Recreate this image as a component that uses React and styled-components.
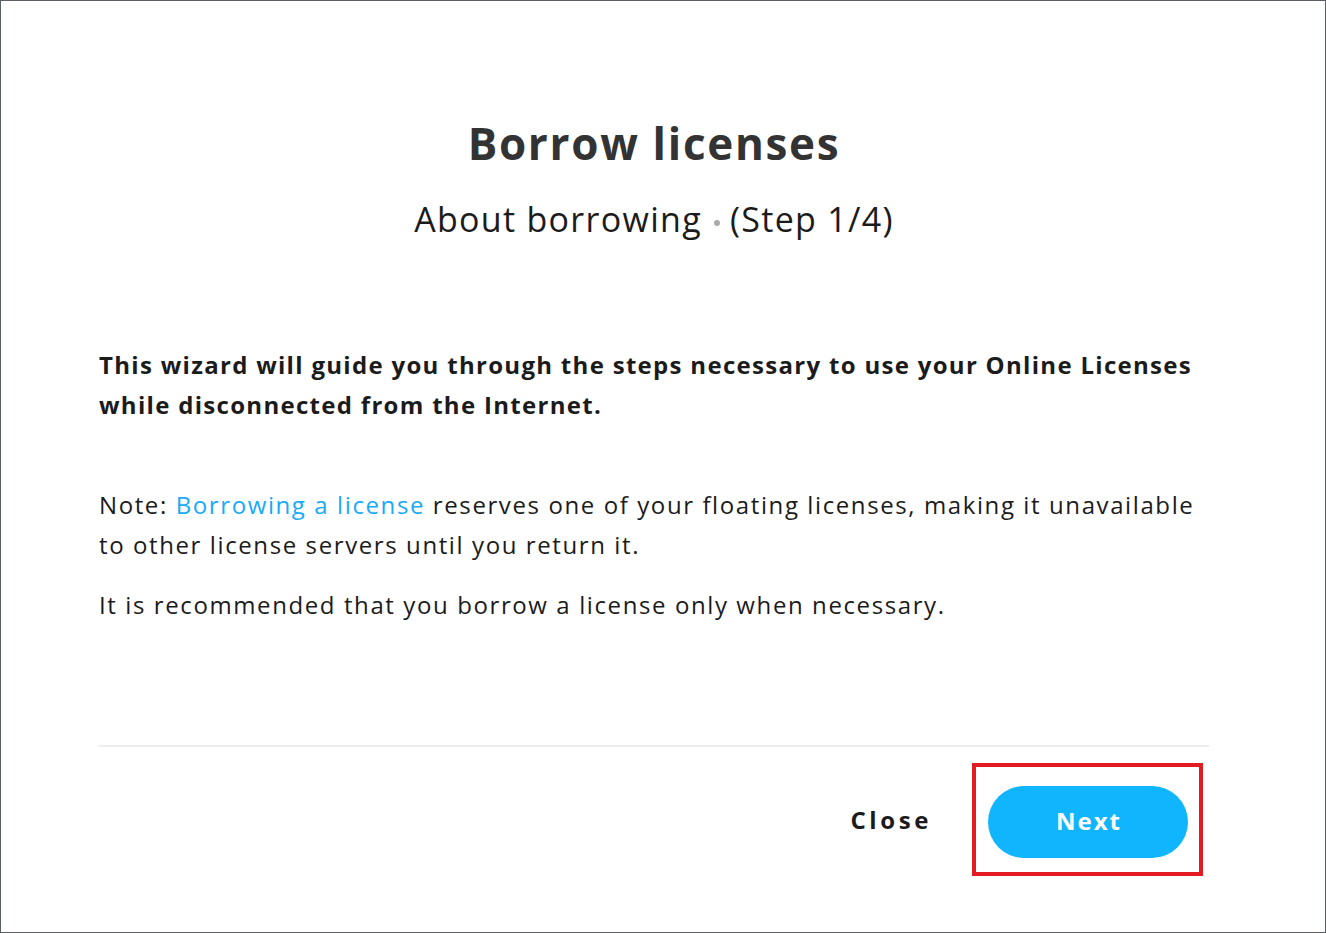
import React from "react";
import styled, { createGlobalStyle } from "styled-components";

const GlobalStyle = createGlobalStyle`
  html, body {
    margin: 0;
    padding: 0;
    background: #ffffff;
  }
  body {
    font-family: "Open Sans", "Noto Sans", sans-serif;
    color: #1b1b1b;
  }
`;

const Frame = styled.div`
  width: 1326px;
  height: 933px;
  box-sizing: border-box;
  border: 1px solid #5a5f66;
  background: #ffffff;
  padding: 0 116px 0 98px;
  display: flex;
  flex-direction: column;
`;

const Header = styled.header`
  text-align: center;
  padding-top: 112px;
`;

const Title = styled.h1`
  margin: 0;
  font-size: 44px;
  line-height: 60px;
  font-weight: 700;
  letter-spacing: 1.7px;
  color: #333333;
`;

const Subtitle = styled.h2`
  margin: 23px 0 0;
  font-size: 34px;
  line-height: 46px;
  font-weight: 400;
  letter-spacing: 1.3px;
  color: #1b1b1b;
`;

const Dot = styled.span`
  display: inline-block;
  width: 6px;
  height: 6px;
  border-radius: 50%;
  background: #aaaaaa;
  vertical-align: middle;
  margin: 0 10px 0 12px;
`;

const Body = styled.section`
  margin-top: 103px;
  flex: 1;
`;

const Lead = styled.p`
  margin: 0 0 60px;
  font-size: 24px;
  line-height: 40px;
  font-weight: 700;
  letter-spacing: 1.3px;
`;

const Text = styled.p`
  margin: 0 0 20px;
  font-size: 24px;
  line-height: 40px;
  font-weight: 400;
  letter-spacing: 1.6px;
`;

const Link = styled.a`
  color: #19aaf8;
  text-decoration: none;
  cursor: pointer;
`;

const Footer = styled.footer`
  border-top: 2px solid #ededed;
  display: flex;
  justify-content: flex-end;
  align-items: center;
  gap: 40px;
  padding: 16px 6px 56px 0;
`;

const CloseButton = styled.button`
  background: none;
  border: none;
  padding: 0;
  font-family: inherit;
  font-size: 24px;
  font-weight: 700;
  letter-spacing: 3.6px;
  color: #1b1b1b;
  cursor: pointer;
`;

const Highlight = styled.div`
  border: 4px solid #e21b23;
  padding: 19px 11px 14px 12px;
`;

const NextButton = styled.button`
  width: 200px;
  height: 72px;
  border: none;
  border-radius: 36px;
  background: #10b5fd;
  color: #ffffff;
  font-family: inherit;
  font-size: 24px;
  font-weight: 700;
  letter-spacing: 2px;
  padding: 0 0 3px 2px;
  cursor: pointer;
`;

export default function App() {
  return (
    <>
      <GlobalStyle />
      <Frame>
        <Header>
          <Title>Borrow licenses</Title>
          <Subtitle>
            About borrowing<Dot />(Step 1/4)
          </Subtitle>
        </Header>
        <Body>
          <Lead>
            This wizard will guide you through the steps necessary to use your
            Online Licenses while disconnected from the Internet.
          </Lead>
          <Text>
            Note: <Link>Borrowing a license</Link> reserves one of your floating
            licenses, making it unavailable to other license servers until you
            return it.
          </Text>
          <Text>
            It is recommended that you borrow a license only when necessary.
          </Text>
        </Body>
        <Footer>
          <CloseButton>Close</CloseButton>
          <Highlight>
            <NextButton>Next</NextButton>
          </Highlight>
        </Footer>
      </Frame>
    </>
  );
}
